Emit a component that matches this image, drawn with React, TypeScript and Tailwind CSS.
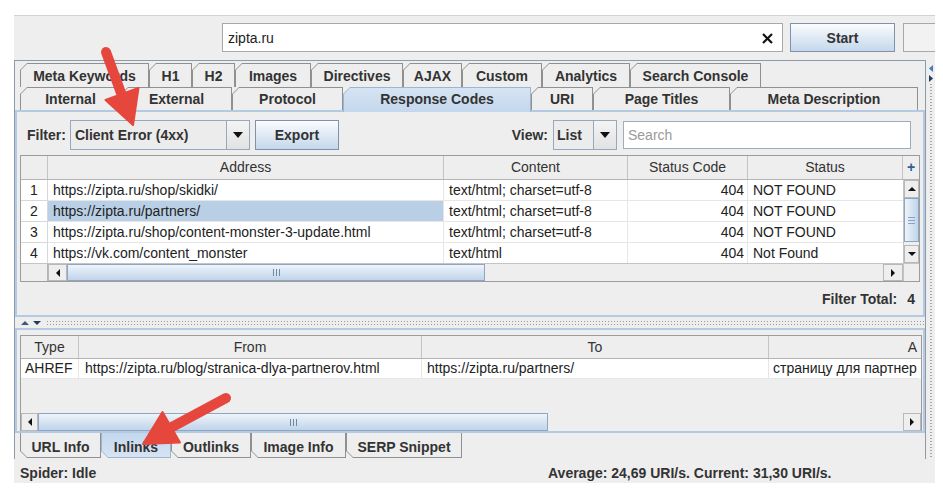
import React from "react";

type TabDef = { label: string; w: string; sel?: boolean };

const row1Tabs: TabDef[] = [
  { label: "Meta Keywords", w: "w-[129px]" },
  { label: "H1", w: "w-[43px]" },
  { label: "H2", w: "w-[43px]" },
  { label: "Images", w: "w-[76px]" },
  { label: "Directives", w: "w-[92px]" },
  { label: "AJAX", w: "w-[59px]" },
  { label: "Custom", w: "w-[80px]" },
  { label: "Analytics", w: "w-[88px]" },
  { label: "Search Console", w: "w-[131px]" },
];

const row2Tabs: TabDef[] = [
  { label: "Internal", w: "w-[101px]" },
  { label: "External", w: "w-[111px]" },
  { label: "Protocol", w: "w-[111px]" },
  { label: "Response Codes", w: "w-[188px]", sel: true },
  { label: "URI", w: "w-[62px]" },
  { label: "Page Titles", w: "w-[137px]" },
  { label: "Meta Description", w: "w-[188px]" },
];

const bottomTabs: TabDef[] = [
  { label: "URL Info", w: "w-[81px]" },
  { label: "Inlinks", w: "w-[70px]", sel: true },
  { label: "Outlinks", w: "w-[80px]" },
  { label: "Image Info", w: "w-[95px]" },
  { label: "SERP Snippet", w: "w-[116px]" },
];

const rows = [
  ["1", "https://zipta.ru/shop/skidki/", "text/html; charset=utf-8", "404", "NOT FOUND"],
  ["2", "https://zipta.ru/partners/", "text/html; charset=utf-8", "404", "NOT FOUND"],
  ["3", "https://zipta.ru/shop/content-monster-3-update.html", "text/html; charset=utf-8", "404", "NOT FOUND"],
  ["4", "https://vk.com/content_monster", "text/html", "404", "Not Found"],
];

function TopTab({ t, tall }: { t: TabDef; tall: boolean }) {
  const h = t.sel ? "h-[25px] relative z-10" : tall ? "h-[24px]" : "h-[23px]";
  return (
    <div
      className={`${t.w} ${h} shrink-0 pt-px px-px ${
        t.sel ? "bg-[#9db5d0]" : "bg-[#909090]"
      } [clip-path:polygon(7px_0,100%_0,100%_100%,0_100%,0_7px)]`}
    >
      <div
        className={`w-full h-full flex items-start ${tall ? "pt-[2px]" : "pt-[1px]"} justify-center font-bold text-[14px] text-[#333] ${
          t.sel ? "bg-linear-to-b from-[#d6e4f3] to-[#c3d7ed]" : "bg-[#eeeeee]"
        } [clip-path:polygon(6px_0,100%_0,100%_100%,0_100%,0_6px)]`}
      >
        {t.label}
      </div>
    </div>
  );
}

function BottomTab({ t }: { t: TabDef }) {
  return (
    <div
      className={`${t.w} h-[25px] shrink-0 pb-px px-px ${
        t.sel ? "bg-[#9db5d0]" : "bg-[#909090]"
      } [clip-path:polygon(0_0,100%_0,100%_100%,7px_100%,0_18px)]`}
    >
      <div
        className={`w-full h-full flex items-center pt-[4px] justify-center font-bold text-[14px] text-[#333] ${
          t.sel ? "bg-linear-to-b from-[#c3d7ed] to-[#d6e4f3]" : "bg-[#eeeeee]"
        } [clip-path:polygon(0_0,100%_0,100%_100%,6px_100%,0_18px)]`}
      >
        {t.label}
      </div>
    </div>
  );
}

function TriDown() {
  return (
    <svg width="10" height="6" viewBox="0 0 10 6">
      <polygon points="0,0 10,0 5,6" fill="#111" />
    </svg>
  );
}

function ArrowBtn({ dir, w }: { dir: "l" | "r" | "u" | "d"; w: string }) {
  const pts =
    dir === "l" ? "5,0 5,8 1,4" : dir === "r" ? "1,0 1,8 5,4" : dir === "u" ? "0,5 8,5 4,1" : "0,1 8,1 4,5";
  const vb = dir === "l" || dir === "r" ? "0 0 6 8" : "0 0 8 6";
  const sz = dir === "l" || dir === "r" ? { w: 6, h: 8 } : { w: 8, h: 6 };
  return (
    <div className={`${w} shrink-0 bg-[#eeeeee] border border-[#b8b8b8] flex items-center justify-center`}>
      <svg width={sz.w} height={sz.h} viewBox={vb}>
        <polygon points={pts} fill="#111" />
      </svg>
    </div>
  );
}

function HGrip() {
  return (
    <div className="flex gap-[2px]">
      <div className="w-px h-[7px] bg-[#6f88a6]" />
      <div className="w-px h-[7px] bg-[#6f88a6]" />
      <div className="w-px h-[7px] bg-[#6f88a6]" />
    </div>
  );
}

export default function App() {
  return (
    <div className="relative w-[943px] h-[497px] bg-white overflow-hidden font-['Liberation_Sans',Arial,sans-serif] text-[14px] text-[#333]">
      <div className="ml-[14px] mt-[15px] w-[921px] h-[468px] bg-[#eeeeee] border-t border-[#d2d2d2] flex flex-col overflow-hidden">
        {/* top bar */}
        <div className="h-[44px] shrink-0 flex items-start pt-[7px]">
          <div className="ml-[208px] w-[561px] h-[29px] shrink-0 bg-white border border-[#a8a8a8] flex items-center pl-[5px] pr-[9px] pt-px">
            <span className="flex-1 text-[#222]">zipta.ru</span>
            <svg width="11" height="11" viewBox="0 0 11 11">
              <line x1="1" y1="1" x2="10" y2="10" stroke="#111" strokeWidth="2.2" />
              <line x1="10" y1="1" x2="1" y2="10" stroke="#111" strokeWidth="2.2" />
            </svg>
          </div>
          <div className="ml-[7px] w-[105px] h-[29px] shrink-0 border border-[#7e93ab] bg-linear-to-b from-[#fbfcfe] to-[#c4d7eb] flex items-center justify-center font-bold pt-px">
            Start
          </div>
          <div className="ml-[8px] w-[40px] h-[29px] shrink-0 border border-[#a8a8a8] bg-[#f2f2f2]" />
        </div>

        {/* middle */}
        <div className="h-[399px] shrink-0 flex">
          <div className="w-[912px] shrink-0 flex flex-col border-l border-t border-r border-[#8e9aa8] pt-[2px]">
            {/* tab rows */}
            <div className="h-[24px] shrink-0 flex items-start pl-[5px]">
              {row1Tabs.map((t) => (
                <TopTab key={t.label} t={t} tall={true} />
              ))}
            </div>
            <div className="h-[23px] shrink-0 flex items-start pl-[5px]">
              {row2Tabs.map((t) => (
                <TopTab key={t.label} t={t} tall={false} />
              ))}
            </div>

            {/* top content panel */}
            <div className="h-[207px] shrink-0 border-2 border-[#b4cae3] flex flex-col">
              {/* filter row */}
              <div className="mt-[8px] h-[30px] shrink-0 flex items-center">
                <span className="ml-[10px] font-bold">Filter:</span>
                <div className="ml-[4px] w-[180px] h-[30px] shrink-0 border border-[#96a8bd] bg-[#ececec] flex">
                  <div className="flex-1 flex items-center pl-[4px] font-bold">Client Error (4xx)</div>
                  <div className="w-[23px] border-l border-[#96a8bd] bg-linear-to-b from-[#f4f4f4] to-[#e2e2e2] flex items-center justify-center">
                    <TriDown />
                  </div>
                </div>
                <div className="ml-[5px] w-[84px] h-[30px] shrink-0 border border-[#7e93ab] bg-linear-to-b from-[#fbfcfe] to-[#c4d7eb] flex items-center justify-center font-bold">
                  Export
                </div>
                <div className="flex-1" />
                <span className="font-bold">View:</span>
                <div className="ml-[5px] w-[64px] h-[30px] shrink-0 border border-[#96a8bd] bg-[#ececec] flex">
                  <div className="flex-1 flex items-center pl-[3px] font-bold">List</div>
                  <div className="w-[23px] border-l border-[#96a8bd] bg-linear-to-b from-[#f4f4f4] to-[#e2e2e2] flex items-center justify-center">
                    <TriDown />
                  </div>
                </div>
                <div className="ml-[6px] mr-[12px] w-[288px] h-[28px] shrink-0 bg-white border border-[#9eadbd] flex items-center pl-[4px] text-[#9a9a9a]">
                  Search
                </div>
              </div>

              {/* table */}
              <div className="mt-[5px] ml-[3px] w-[900px] h-[127px] shrink-0 border border-[#9c9c9c] flex flex-col bg-[#eeeeee]">
                <div className="h-[24px] shrink-0 flex bg-[#eeeeee] border-b border-[#b4b4b4]">
                  <div className="w-[27px] shrink-0 border-r border-[#c4c4c4]" />
                  <div className="w-[396px] shrink-0 border-r border-[#c4c4c4] flex items-center justify-center">Address</div>
                  <div className="w-[184px] shrink-0 border-r border-[#c4c4c4] flex items-center justify-center">Content</div>
                  <div className="w-[120px] shrink-0 border-r border-[#c4c4c4] flex items-center justify-center">Status Code</div>
                  <div className="w-[155px] shrink-0 border-r border-[#c4c4c4] flex items-center justify-center">Status</div>
                  <div className="w-[16px] shrink-0 flex items-center justify-center font-bold text-[#2f5f96]">+</div>
                </div>
                <div className="h-[83px] shrink-0 flex">
                  <div className="w-[882px] shrink-0 flex flex-col overflow-hidden bg-white">
                    {rows.map((r, i) => (
                      <div key={r[0]} className="h-[21px] shrink-0 flex text-[#222]">
                        <div className="w-[27px] shrink-0 border-r border-b border-[#d8d8d8] flex items-center justify-center">{r[0]}</div>
                        <div
                          className={`w-[396px] shrink-0 border-r border-b border-[#e6e6e6] flex items-center pl-[5px] whitespace-nowrap overflow-hidden ${
                            i === 1 ? "bg-[#b8cfe5]" : ""
                          }`}
                        >
                          {r[1]}
                        </div>
                        <div className="w-[184px] shrink-0 border-r border-b border-[#e6e6e6] flex items-center pl-[5px] whitespace-nowrap overflow-hidden">{r[2]}</div>
                        <div className="w-[120px] shrink-0 border-r border-b border-[#e6e6e6] flex items-center justify-end pr-[3px]">{r[3]}</div>
                        <div className="w-[155px] shrink-0 border-b border-[#e6e6e6] flex items-center pl-[5px] whitespace-nowrap overflow-hidden">{r[4]}</div>
                      </div>
                    ))}
                  </div>
                  {/* vertical scrollbar */}
                  <div className="w-[16px] shrink-0 flex flex-col bg-[#eeeeee] border-l border-[#c4c4c4]">
                    <ArrowBtn dir="u" w="h-[18px]" />
                    <div className="h-[44px] shrink-0 border border-[#8ea6c2] bg-linear-to-r from-[#eef4fa] to-[#c0d4ea] flex flex-col items-center justify-center gap-[2px]">
                      <div className="w-[7px] h-px bg-[#8aa3c4]" />
                      <div className="w-[7px] h-px bg-[#8aa3c4]" />
                      <div className="w-[7px] h-px bg-[#8aa3c4]" />
                    </div>
                    <div className="flex-1" />
                    <ArrowBtn dir="d" w="h-[18px]" />
                  </div>
                </div>
                {/* horizontal scrollbar row */}
                <div className="h-[18px] shrink-0 flex border-t border-[#c4c4c4]">
                  <div className="w-[27px] shrink-0 bg-[#eeeeee] border-r border-[#b4b4b4]" />
                  <div className="w-[855px] shrink-0 flex bg-[#eeeeee]">
                    <ArrowBtn dir="l" w="w-[19px]" />
                    <div className="w-[418px] shrink-0 border border-[#8ea6c2] bg-linear-to-b from-[#eef4fa] to-[#c0d4ea] flex items-center justify-center">
                      <HGrip />
                    </div>
                    <div className="flex-1" />
                    <ArrowBtn dir="r" w="w-[20px]" />
                  </div>
                  <div className="w-[16px] shrink-0 bg-[#eeeeee] border-l border-[#c4c4c4]" />
                </div>
              </div>

              {/* filter total */}
              <div className="h-[33px] shrink-0 flex items-center justify-end pr-[8px] pt-px font-bold">
                <span>Filter Total:</span>
                <span className="ml-[10px]">4</span>
              </div>
            </div>

            {/* splitter */}
            <div className="h-[11px] shrink-0 flex items-center pl-[5px]">
              <svg width="24" height="6" viewBox="0 0 24 6">
                <polygon points="1,5 9,5 5,1" fill="#3d5778" />
                <polygon points="13,1 21,1 17,5" fill="#243b5c" />
              </svg>
              <div className="ml-[2px] flex-1 h-[5px] bg-[radial-gradient(circle,#9a9a9a_0.7px,transparent_0.9px)] bg-[length:3px_3px]" />
            </div>

            {/* bottom panel */}
            <div className="h-[105px] shrink-0 border-2 border-[#b4cae3] pt-[5px]">
              <div className="ml-[3px] w-[902px] h-[96px] border-l border-t border-r border-[#9c9c9c] flex flex-col bg-[#eeeeee]">
                <div className="h-[23px] shrink-0 flex border-b border-[#b4b4b4]">
                  <div className="w-[58px] shrink-0 border-r border-[#c4c4c4] flex items-center justify-center">Type</div>
                  <div className="w-[343px] shrink-0 border-r border-[#c4c4c4] flex items-center justify-center">From</div>
                  <div className="w-[347px] shrink-0 border-r border-[#c4c4c4] flex items-center justify-center">To</div>
                  <div className="w-[150px] shrink-0 flex items-center justify-end pr-[2px]">A</div>
                </div>
                <div className="h-[20px] shrink-0 flex bg-white text-[#222]">
                  <div className="w-[58px] shrink-0 border-r border-b border-[#e6e6e6] flex items-center pl-[4px]">AHREF</div>
                  <div className="w-[343px] shrink-0 border-r border-b border-[#e6e6e6] flex items-center pl-[6px] whitespace-nowrap overflow-hidden">
                    https://zipta.ru/blog/stranica-dlya-partnerov.html
                  </div>
                  <div className="w-[347px] shrink-0 border-r border-b border-[#e6e6e6] flex items-center pl-[5px] whitespace-nowrap overflow-hidden">
                    https://zipta.ru/partners/
                  </div>
                  <div className="w-[150px] shrink-0 border-b border-[#e6e6e6] flex items-center pl-[4px] whitespace-nowrap overflow-hidden">
                    страницу для партнер
                  </div>
                </div>
                <div className="h-[34px] shrink-0" />
                <div className="h-[18px] shrink-0 flex">
                  <ArrowBtn dir="l" w="w-[17px]" />
                  <div className="w-[510px] shrink-0 border border-[#8ea6c2] bg-linear-to-b from-[#eef4fa] to-[#c0d4ea] flex items-center justify-center">
                    <HGrip />
                  </div>
                  <div className="flex-1" />
                  <ArrowBtn dir="r" w="w-[18px]" />
                </div>
              </div>
            </div>

            {/* bottom tabs */}
            <div className="h-[25px] shrink-0 flex items-start pl-[5px]">
              {bottomTabs.map((t) => (
                <BottomTab key={t.label} t={t} />
              ))}
            </div>
          </div>

          {/* right collapsed divider */}
          <div className="w-[9px] shrink-0 flex flex-col items-center pt-[4px]">
            <svg width="6" height="18" viewBox="0 0 6 18">
              <polygon points="5,1 5,8 1,4.5" fill="#4a78b8" />
              <polygon points="1,11 1,18 5,14.5" fill="#243b5c" />
            </svg>
            <div className="mt-[2px] w-[2px] flex-1 bg-[repeating-linear-gradient(to_bottom,#a6a6a6_0px,#a6a6a6_1px,transparent_1px,transparent_3px)]" />
          </div>
        </div>

        {/* status bar */}
        <div className="h-[24px] shrink-0 flex items-center pt-[5px] font-bold">
          <span className="ml-[6px] w-[528px] shrink-0">Spider: Idle</span>
          <span>Average: 24,69 URI/s. Current: 31,30 URI/s.</span>
        </div>
      </div>

      {/* red annotation arrows */}
      <svg className="absolute left-0 top-0 pointer-events-none" width="943" height="497" viewBox="0 0 943 497">
        <line x1="106" y1="52" x2="121" y2="93" stroke="#e6473d" strokeWidth="10" strokeLinecap="round" />
        <polygon points="133,125 105.5,100 138.5,88" fill="#e6473d" stroke="#e6473d" strokeWidth="2" strokeLinejoin="round" />
        <line x1="226" y1="398" x2="172" y2="427" stroke="#e6473d" strokeWidth="10" strokeLinecap="round" />
        <polygon points="143,444 162.5,412 180,442.5" fill="#e6473d" stroke="#e6473d" strokeWidth="2" strokeLinejoin="round" />
      </svg>
    </div>
  );
}
